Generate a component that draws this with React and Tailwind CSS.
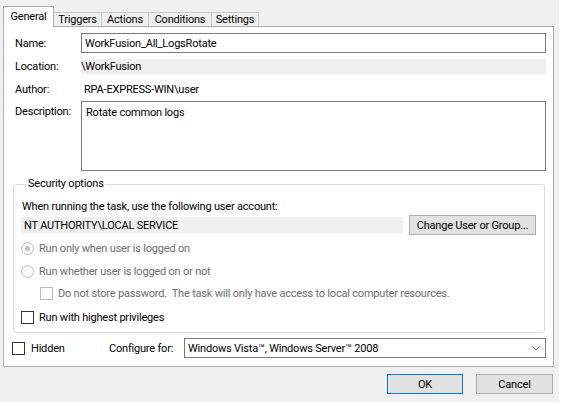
import { useState } from "react";

function Checkbox({ checked, disabled }) {
    return (
        <span
            className={
                "inline-block w-[13px] h-[13px] shrink-0 bg-white border " +
                (disabled ? "border-[#bcbcbc]" : "border-[#333333]")
            }
        >
            {checked && <span className="block w-full h-full" />}
        </span>
    );
}

function Radio({ checked }) {
    return (
        <span className="inline-flex items-center justify-center w-[13px] h-[13px] shrink-0 rounded-full bg-white border border-[#bcbcbc]">
            {checked && <span className="block w-[5px] h-[5px] rounded-full bg-[#bcbcbc]" />}
        </span>
    );
}

const tabs = [
    { name: "Triggers", w: "w-[48px]" },
    { name: "Actions", w: "w-[47px]" },
    { name: "Conditions", w: "w-[63px]" },
    { name: "Settings", w: "w-[47px]" },
];

export default function App() {
    const [name] = useState("WorkFusion_All_LogsRotate");

    return (
        <div className="w-[562px] h-[405px] bg-white font-['Roboto','Liberation_Sans',sans-serif] text-[11px] tracking-[-0.2px] text-black leading-none">
            <div className="w-[559px] h-[402px] bg-[#f0f0f0] flex flex-col">
                {/* tabs */}
                <div className="h-[26px] pl-[3px] flex items-end shrink-0">
                    <div className="w-[51px] h-[21px] -mb-px relative z-10 bg-white border border-b-0 border-[#adadad] flex items-center justify-center pb-[2px]">
                        General
                    </div>
                    {tabs.map((t) => (
                        <div
                            key={t.name}
                            className={t.w + " h-[14px] border-t border-r border-[#c8c8c8] flex items-center justify-center"}
                        >
                            {t.name}
                        </div>
                    ))}
                </div>

                {/* panel */}
                <div className="ml-[3px] w-[551px] h-[341px] bg-white border border-[#adadad] pt-[6px] pl-[8px] pr-[7px] flex flex-col shrink-0">
                    <div className="flex items-center h-[20px]">
                        <div className="w-[69px] pl-[3px]">Name:</div>
                        <div className="flex-1 h-[20px] border border-[#7a7a7a] flex items-center pl-[3px]">{name}</div>
                    </div>
                    <div className="flex items-center h-[15px] mt-[6px]">
                        <div className="w-[69px] pl-[3px]">Location:</div>
                        <div className="flex-1 h-[15px] bg-[#f0f0f0] flex items-center">\WorkFusion</div>
                    </div>
                    <div className="flex items-center h-[15px] mt-[8px]">
                        <div className="w-[69px] pl-[3px]">Author:</div>
                        <div className="flex-1 pl-[3px]">RPA-EXPRESS-WIN\user</div>
                    </div>
                    <div className="flex h-[70px] mt-[4px]">
                        <div className="w-[69px] pl-[3px] pt-[5px]">Description:</div>
                        <div className="flex-1 border border-[#7a7a7a] pl-[4px] pt-[5px]">Rotate common logs</div>
                    </div>

                    {/* security options */}
                    <fieldset className="mt-[6px] ml-px mr-px h-[156px] border border-[#dcdcdc] rounded-[3px] px-[7px] pb-0">
                        <legend className="ml-[5px] px-[2px] h-[14px] leading-[14px]">Security options</legend>
                        <div className="mt-[8px] ml-px h-[14px] flex items-center">
                            When running the task, use the following user account:
                        </div>
                        <div className="mt-[2px] h-[20px] flex items-center">
                            <div className="w-[382px] h-[16px] bg-[#f0f0f0] flex items-center pl-[3px]">
                                NT AUTHORITY\LOCAL SERVICE
                            </div>
                            <div className="ml-[6px] w-[127px] h-[20px] bg-[#e1e1e1] border border-[#adadad] flex items-center justify-center">
                                Change User or Group...
                            </div>
                        </div>
                        <div className="mt-[6px] h-[14px] flex items-center gap-[5px] text-[#6d6d6d]">
                            <Radio checked />
                            Run only when user is logged on
                        </div>
                        <div className="mt-[9px] h-[14px] flex items-center gap-[5px] text-[#6d6d6d]">
                            <Radio />
                            Run whether user is logged on or not
                        </div>
                        <div className="mt-[8px] h-[14px] pl-[19px] flex items-center gap-[5px] text-[#6d6d6d]">
                            <Checkbox disabled />
                            Do not store password.&nbsp; The task will only have access to local computer resources.
                        </div>
                        <div className="mt-[10px] h-[14px] flex items-center gap-[5px]">
                            <Checkbox />
                            Run with highest privileges
                        </div>
                    </fieldset>

                    <div className="mt-[5px] h-[20px] flex items-center">
                        <Checkbox />
                        <span className="ml-[6px] w-[78px]">Hidden</span>
                        <span className="w-[75px]">Configure for:</span>
                        <div className="flex-1 h-[20px] border border-[#7a7a7a] bg-white flex items-center pl-[3px] pr-[5px]">
                            <span className="flex-1">Windows Vista™, Windows Server™ 2008</span>
                            <svg width="8" height="5" viewBox="0 0 8 5" fill="none">
                                <path d="M0.5 0.5 L4 4 L7.5 0.5" stroke="#606060" strokeWidth="1" />
                            </svg>
                        </div>
                    </div>
                </div>

                {/* bottom buttons */}
                <div className="mt-[7px] flex justify-end pr-[6px] gap-[13px]">
                    <div className="w-[76px] h-[20px] bg-[#e1e1e1] border border-[#0078d7] flex items-center justify-center">
                        OK
                    </div>
                    <div className="w-[77px] h-[20px] bg-[#e1e1e1] border border-[#adadad] flex items-center justify-center">
                        Cancel
                    </div>
                </div>
            </div>
        </div>
    );
}
